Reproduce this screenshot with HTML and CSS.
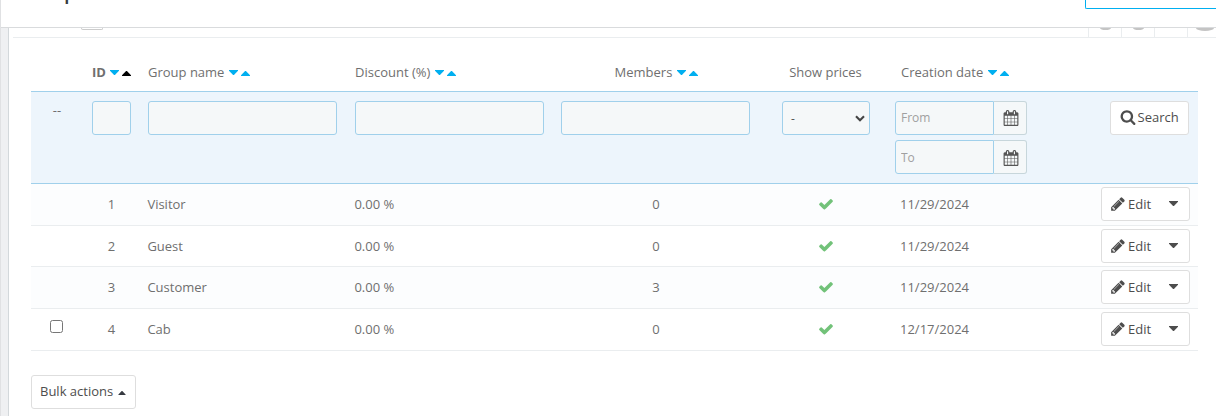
FILE: index.html
```
<!DOCTYPE html>
<html lang="en">
<head>
<meta charset="utf-8">
<title>Groups</title>
<link rel="stylesheet" href="styles.css">
</head>
<body>
<svg class="sprite" width="0" height="0">
  <symbol id="search" viewBox="0 0 1792 1792"><path d="M1216 832q0-185-131.500-316.500t-316.500-131.500-316.500 131.500-131.500 316.500 131.500 316.500 316.500 131.500 316.500-131.500 131.500-316.500zm512 832q0 52-38 90t-90 38q-54 0-90-38l-343-342q-179 124-399 124-143 0-273.500-55.500t-225-150-150-225-55.500-273.500 55.500-273.500 150-225 225-150 273.500-55.500 273.500 55.500 225 150 150 225 55.500 273.500q0 220-124 399l343 343q37 37 37 90z"/></symbol>
  <symbol id="check" viewBox="0 0 1792 1792"><path d="M1671 566q0 40-28 68l-724 724-136 136q-28 28-68 28t-68-28l-136-136-362-362q-28-28-28-68t28-68l136-136q28-28 68-28t68 28l294 295 656-657q28-28 68-28t68 28l136 136q28 28 28 68z"/></symbol>
  <symbol id="pencil" viewBox="0 0 1792 1792"><path d="M491 1536l91-91-235-235-91 91v107h128v128h107zm523-928q0-22-22-22-10 0-17 7l-542 542q-7 7-7 17 0 22 22 22 10 0 17-7l542-542q7-7 7-17zm-54-192l416 416-832 832h-416v-416zm683 96q0 53-37 90l-166 166-416-416 166-165q36-38 90-38 53 0 91 38l235 234q37 39 37 91z"/></symbol>
  <symbol id="calendar" viewBox="0 0 1792 1792"><path d="M192 1664h288v-288h-288v288zm352 0h320v-288h-320v288zm-352-352h288v-320h-288v320zm352 0h320v-320h-320v320zm-352-384h288v-288h-288v288zm736 736h320v-288h-320v288zm-384-736h320v-288h-320v288zm768 736h288v-288h-288v288zm-384-352h320v-320h-320v320zm-352-864v-288q0-13-9.500-22.500t-22.500-9.500h-64q-13 0-22.500 9.500t-9.500 22.500v288q0 13 9.500 22.500t22.500 9.500h64q13 0 22.500-9.500t9.500-22.500zm736 864h288v-320h-288v320zm-384-384h320v-288h-320v288zm384 0h288v-288h-288v288zm32-480v-288q0-13-9.500-22.500t-22.500-9.500h-64q-13 0-22.500 9.500t-9.500 22.500v288q0 13 9.500 22.500t22.500 9.500h64q13 0 22.500-9.500t9.500-22.500zm384-64v1280q0 52-38 90t-90 38h-1408q-52 0-90-38t-38-90v-1280q0-52 38-90t90-38h128v-96q0-66 47-113t113-47h64q66 0 113 47t47 113v96h384v-96q0-66 47-113t113-47h64q66 0 113 47t47 113v96h128q52 0 90 38t38 90z"/></symbol>
  <symbol id="down" viewBox="0 0 9 5"><path d="M0 0h9v.7L4.900 5h-.8L0 .7z"/></symbol>
  <symbol id="up" viewBox="0 0 9 5"><path d="M0 5h9v-.7L4.900 0h-.8L0 4.300z"/></symbol>
</svg>

<header class="topbar">
  <h1 class="title">Groups</h1>
  <div class="top-action"></div>
</header>

<main class="panel">
  <div class="panel-head">
    <span class="count"></span>
    <div class="tools">
      <span class="tool"><i class="dot"></i></span>
      <span class="tool"><i class="dot"></i></span>
      <span class="tool"></span>
      <span class="tool"><i class="dot wide"></i></span>
    </div>
  </div>

  <div class="table">
    <div class="row head">
      <div></div>
      <div class="c-id"><b>ID</b><svg class="sort"><use href="#down"/></svg><svg class="sort asc active"><use href="#up"/></svg></div>
      <div>Group name<svg class="sort"><use href="#down"/></svg><svg class="sort asc"><use href="#up"/></svg></div>
      <div>Discount (%)<svg class="sort"><use href="#down"/></svg><svg class="sort asc"><use href="#up"/></svg></div>
      <div class="center members">Members<svg class="sort"><use href="#down"/></svg><svg class="sort asc"><use href="#up"/></svg></div>
      <div class="center">Show prices</div>
      <div class="c-date">Creation date<svg class="sort"><use href="#down"/></svg><svg class="sort asc"><use href="#up"/></svg></div>
      <div></div>
    </div>

    <div class="row filter">
      <div class="dashes">--</div>
      <div class="f-id"><input class="field" type="text"></div>
      <div><input class="field" type="text"></div>
      <div><input class="field" type="text"></div>
      <div><input class="field" type="text"></div>
      <div class="f-show"><span class="field select">-<svg class="chevron" viewBox="0 0 10 7"><path d="M1 1.200l4 4 4-4"/></svg></span></div>
      <div class="f-date">
        <div class="date"><input class="field" type="text" placeholder="From"><span class="addon"><svg class="cal"><use href="#calendar"/></svg></span></div>
        <div class="date to"><input class="field" type="text" placeholder="To"><span class="addon"><svg class="cal"><use href="#calendar"/></svg></span></div>
      </div>
      <div class="f-search"><button class="btn search"><svg class="glass"><use href="#search"/></svg>Search</button></div>
    </div>

    <div class="row item">
      <div></div><div class="center id">1</div><div>Visitor</div><div>0.00 %</div><div class="center count-cell">0</div>
      <div class="center"><svg class="check"><use href="#check"/></svg></div><div class="date-cell">11/29/2024</div>
      <div class="actions"><button class="btn edit"><svg class="pencil"><use href="#pencil"/></svg>Edit<svg class="caret"><use href="#down"/></svg></button></div>
    </div>
    <div class="row item short">
      <div></div><div class="center id">2</div><div>Guest</div><div>0.00 %</div><div class="center count-cell">0</div>
      <div class="center"><svg class="check"><use href="#check"/></svg></div><div class="date-cell">11/29/2024</div>
      <div class="actions"><button class="btn edit"><svg class="pencil"><use href="#pencil"/></svg>Edit<svg class="caret"><use href="#down"/></svg></button></div>
    </div>
    <div class="row item">
      <div></div><div class="center id">3</div><div>Customer</div><div>0.00 %</div><div class="center count-cell">3</div>
      <div class="center"><svg class="check"><use href="#check"/></svg></div><div class="date-cell">11/29/2024</div>
      <div class="actions"><button class="btn edit"><svg class="pencil"><use href="#pencil"/></svg>Edit<svg class="caret"><use href="#down"/></svg></button></div>
    </div>
    <div class="row item">
      <div class="select-cell"><input class="box" type="checkbox"></div><div class="center id">4</div><div>Cab</div><div>0.00 %</div><div class="center count-cell">0</div>
      <div class="center"><svg class="check"><use href="#check"/></svg></div><div class="date-cell">12/17/2024</div>
      <div class="actions"><button class="btn edit"><svg class="pencil"><use href="#pencil"/></svg>Edit<svg class="caret"><use href="#down"/></svg></button></div>
    </div>
  </div>

  <button class="btn bulk">Bulk actions<svg class="bulk-caret"><use href="#up"/></svg></button>
</main>
</body>
</html>
```
FILE: styles.css
```
* { box-sizing: border-box; }
body {
  margin: 0;
  height: 416px;
  overflow: hidden;
  border-left: 1px solid #e0e1e3;
  background: #eff0f2;
  font: 13px/18px "Open Sans", sans-serif;
  color: #6f6f6f;
}
.sprite { display: block; }
svg { fill: currentColor; flex: none; }

.topbar {
  display: flex;
  justify-content: space-between;
  height: 28px;
  overflow: hidden;
  background: #fff;
  border-bottom: 1px solid #d9dbdd;
}
.title {
  margin: -22px 0 0 15px;
  font-size: 20px;
  line-height: 27px;
  font-weight: 600;
  color: #363a41;
}
.top-action {
  width: 131px;
  height: 9px;
  border: solid #00aff0;
  border-width: 0 0 1px 1px;
  border-bottom-left-radius: 2px;
}

.panel {
  height: 388px;
  margin-left: 7px;
  padding-left: 22px;
  border-left: 1px solid #d3d8db;
  background: #fff;
}
.panel-head {
  display: flex;
  justify-content: space-between;
  height: 10px;
  margin-left: -18px;
  padding-left: 68px;
  border-bottom: 1px solid #eaedef;
}
.count {
  width: 22px;
  height: 2px;
  border: 1px solid #ccc;
  border-top: 0;
  border-radius: 0 0 8px 8px;
}
.tools { display: flex; overflow: hidden; }
.tool {
  display: flex;
  justify-content: center;
  width: 33px;
  border-left: 1px solid #eaedef;
}
.tool:last-child { width: 29px; padding-left: 6px; }
.dot {
  width: 11px;
  height: 2px;
  border-radius: 0 0 50% 50% / 0 0 100% 100%;
  background: #c4c4c4;
}
.wide { width: 18px; height: 3px; }

.table { width: 1167px; margin-top: 16px; }
.row {
  display: grid;
  grid-template-columns: 51px 60px 207px 206px 201px 139px 144px 159px;
  align-items: center;
}
.row > div { padding-left: 5px; }
.row > .center { padding: 0; text-align: center; }
.head { height: 38px; padding-bottom: 2px; border-bottom: 1px solid #a0d0eb; }
.head > div { padding-left: 6px; white-space: nowrap; }
.head > .members { padding-left: 2px; }
.head > .c-id { padding-left: 10px; }
.head > .c-date { padding-left: 6px; }
.sort { width: 9px; height: 5px; margin-left: 5px; color: #00aff0; vertical-align: 2px; }
.asc { margin-left: 3px; vertical-align: 1px; }
.c-id .sort:not(.asc) { margin-left: 4px; }
.active { color: #000; }

.filter { height: 92px; align-items: start; padding-top: 9px; background: #edf5fc; border-bottom: 1px solid #a0d0eb; }
.filter > div { padding-left: 6px; }
.filter > .dashes { padding: 0 0 0 1px; text-align: center; }
.filter > .f-id { padding-left: 10px; }
.field {
  display: block;
  width: 189px;
  height: 34px;
  padding: 0 5px 2px;
  border: 1px solid #a0d0eb;
  border-radius: 3px;
  background: #f5f8f9;
  font: 12px/17px "Open Sans", sans-serif;
  color: #555;
}
.field::placeholder { color: #a0a0a0; opacity: 1; }
.f-id .field { width: 39px; }
.filter > .f-show { padding-left: 26px; }
.select { display: flex; align-items: center; justify-content: space-between; width: 88px; padding: 0 4px 0 8px; }
.chevron { width: 10px; height: 7px; fill: none; stroke: #444; stroke-width: 2.100; }
.filter > .f-date { display: grid; gap: 5px; padding-left: 0; }
.date { display: flex; }
.f-date .field { width: 99px; border-radius: 3px 0 0 3px; }
.to .field { padding-bottom: 0; }
.addon {
  display: flex;
  align-items: center;
  justify-content: center;
  width: 33px;
  padding-left: 1px;
  border: 1px solid #c7d6db;
  border-left: 0;
  border-radius: 0 3px 3px 0;
  background: #f5f8f9;
  color: #555;
}
.cal { width: 16px; height: 16px; margin-top: -1px; }
.to .cal { margin-top: 1px; }

.btn {
  display: flex;
  align-items: center;
  height: 34px;
  padding: 0 9px;
  border: 1px solid #dedede;
  border-radius: 3px;
  background: #fff;
  font: 13px/18px "Open Sans", sans-serif;
  color: #4d4d4d;
  white-space: nowrap;
}
.f-search { display: flex; justify-content: flex-end; padding-right: 9px; }
.search { width: 79px; padding-bottom: 2px; }
.glass { width: 16px; height: 16px; margin: -1px 2px 0 -1px; }
.search { padding-left: 9.500px; }

.item { height: 42px; padding-bottom: 1px; border-bottom: 1px solid #eaedef; }
.item:nth-child(odd) { background: #fcfdfe; }
.item.short { height: 41px; padding-bottom: 0; }
.item > div { padding-left: 5.400px; }
.row > .id { padding-right: 1px; }
.row > .count-cell { padding-left: 1px; }
.row > .date-cell { padding-left: 5px; }
.check { display: block; width: 16px; height: 16px; margin: 0 auto 1px; color: #72c279; }
.actions { display: flex; justify-content: flex-end; padding-right: 8px; }
.edit { width: 89px; padding-left: 8px; }
.pencil { width: 16px; height: 16px; margin: -1px 2px 0 0; }
.caret { width: 9px; height: 5px; margin: -2px 0 0 18px; }
.row > .select-cell { padding: 0 0 5px; display: flex; justify-content: center; }
.box { width: 13px; height: 13px; margin: 0; }
.bulk { width: 105px; margin-top: 24px; padding: 0 0 2px 8px; }
.bulk-caret { width: 8px; height: 4px; margin: 4px 0 0 5px; color: #363a41; }
```
